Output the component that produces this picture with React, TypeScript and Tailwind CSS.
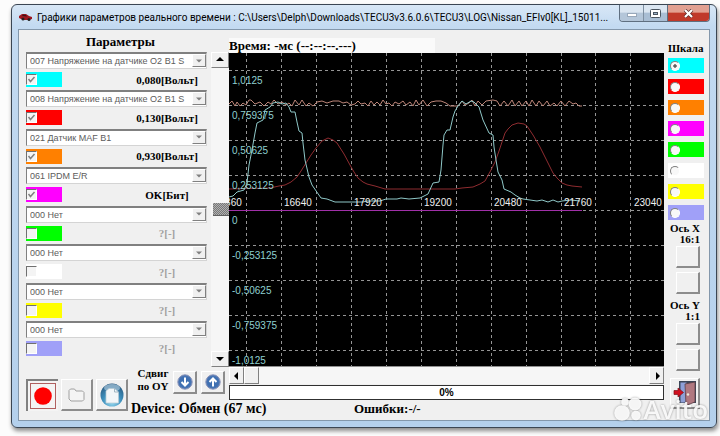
import { useState } from 'react';
import type { ReactNode } from 'react';
import clsx from 'clsx';

interface Channel {
  id: string;
  name: string;
  value: string;
  swatch: string;
  enabled: boolean;
}

const CHANNELS: Channel[] = [
  { id: 'ch0', name: '007 Напряжение на датчике О2 B1 S', value: '0,080[Вольт]', swatch: 'bg-[#00ffff]', enabled: true },
  { id: 'ch1', name: '008 Напряжение на датчике О2 B1 S', value: '0,130[Вольт]', swatch: 'bg-[#ff0000]', enabled: true },
  { id: 'ch2', name: '021 Датчик MAF B1', value: '0,930[Вольт]', swatch: 'bg-[#ff8000]', enabled: true },
  { id: 'ch3', name: '061 IPDM E/R', value: 'OK[Бит]', swatch: 'bg-[#ff00ff]', enabled: true },
  { id: 'ch4', name: '000 Нет', value: '?[-]', swatch: 'bg-[#00ff00]', enabled: false },
  { id: 'ch5', name: '000 Нет', value: '?[-]', swatch: 'bg-white', enabled: false },
  { id: 'ch6', name: '000 Нет', value: '?[-]', swatch: 'bg-[#ffff00]', enabled: false },
  { id: 'ch7', name: '000 Нет', value: '?[-]', swatch: 'bg-[#a0a0f8]', enabled: false },
];

const GRID_X = [17, 52, 87, 122, 157, 192, 227, 262, 297, 332, 366, 401];
const GRID_Y = [17, 52, 87, 122, 157, 192, 227, 262, 297];
const Y_LABELS = ['1,0125', '0,759375', '0,50625', '0,253125', '0', '-0,253125', '-0,50625', '-0,759375', '-1,0125'];
const X_LABELS = ['15360', '16640', '17920', '19200', '20480', '21760', '23040'];

const O2_TRACE =
  '0,144 4,143 8,139 15,137 18,130 20,112 23,97 26,80 28,70 34,67 36,57 41,54 44,50 49,49 53,51 57,50 60,54 62,59 66,59 68,69 70,78 73,80 74,90 76,107 80,124 83,132 92,145 98,146 106,149 134,149 138,148 151,148 157,146 168,146 172,145 180,146 191,145 199,141 204,130 210,129 212,117 214,92 215,82 218,77 221,77 224,64 226,58 229,53 233,48 237,51 242,48 245,49 250,54 254,67 260,80 264,82 265,94 267,107 269,119 273,127 275,136 282,139 286,142 291,145 294,146 301,147 308,148 313,147 319,149 324,147 329,149 333,148 342,147 351,148';

const MAF_TRACE =
  '0,136 41,135 50,133 56,132 62,129 68,124 72,118 77,110 82,102 87,95 93,88 99,85 104,87 108,90 115,101 121,112 125,119 129,125 134,129 138,131 146,133 156,136 226,136 233,135 244,134 251,131 256,128 262,117 266,109 270,98 276,80 279,76 283,72 289,70 295,71 298,73 304,82 311,94 319,110 324,120 328,125 333,130 338,132 343,133 353,134';

const NOISE_TRACE =
  '0,51 3,48 6,53 8,49 11,53 14,50 17,52 20,47 22,47 26,51 31,49 35,53 39,49 42,51 45,47 49,51 53,49 57,52 60,50 63,53 66,47 70,52 73,47 77,53 80,50 84,53 88,49 93,48 98,50 104,48 110,48 114,50 118,49 122,52 126,51 129,48 132,51 136,50 139,53 142,48 145,52 148,49 151,52 154,47 157,51 160,50 163,53 166,49 170,51 174,48 177,52 181,49 184,53 187,47 190,52 194,47 198,53 202,49 207,48 212,48 217,50 221,53 229,53 233,48 236,52 240,50 243,47 246,53 249,48 253,52 257,48 264,47 268,48 271,53 275,48 279,53 283,47 286,53 290,48 293,53 297,48 300,53 303,47 307,53 310,48 314,53 318,48 321,53 325,50 328,53 332,48 336,53 340,48 344,51 347,50 350,53 353,53';

const raised = 'border border-t-white border-l-white border-r-[#808080] border-b-[#808080] bg-[#f0f0f0]';

function Triangle({ dir, muted = false }: { dir: 'up' | 'down' | 'left' | 'right'; muted?: boolean }) {
  const shapes = {
    up: '0,5 4,1 8,5',
    down: '0,2 8,2 4,6',
    left: '5,0 5,8 1,4',
    right: '3,0 3,8 7,4',
  };
  return (
    <svg className={clsx('shrink-0', muted ? 'size-1.5' : 'size-2')} viewBox="0 0 8 8" aria-hidden="true">
      <polygon points={shapes[dir]} fill={muted ? '#808080' : '#000'} />
    </svg>
  );
}

function TitleBar() {
  return (
    <header className="flex h-6 shrink-0 items-center gap-1">
      <svg className="h-3 w-[15px] shrink-0" viewBox="0 0 15 12" aria-hidden="true">
        <path d="M1 5 4 3 8 3 11 5 14 6 14 8 11 9 5 9 1 7Z" fill="#a01820" />
        <path d="M4 5 5 3.500 8 4 9 5.500Z" fill="#3c1418" />
        <circle cx="5" cy="8" r="1.500" fill="#222" />
        <circle cx="11" cy="8.500" r="1.500" fill="#222" />
      </svg>
      <h1 className="min-w-0 flex-1 overflow-hidden font-['Roboto','Noto_Sans',sans-serif] text-[10px] whitespace-nowrap text-black">
        Графики параметров реального времени : C:\Users\Delph\Downloads\TECU3v3.6.0.6\TECU3\LOG\Nissan_EFIv0[KL]_15011...
      </h1>
      <div className="flex h-[17px] shrink-0 self-start overflow-hidden rounded-b border border-t-0 border-[#5f6f80]">
        <button type="button" aria-label="Свернуть" className="flex w-6 items-center justify-center border-r border-[#7f90a2] bg-linear-to-b from-[#dbe6f1] from-45% to-[#b4c6d9] to-50%">
          <span className="mt-1 h-1 w-2.5 border border-[#98a8ba] bg-white" />
        </button>
        <button type="button" aria-label="Развернуть" className="flex w-6 items-center justify-center border-r border-[#5f6f80] bg-linear-to-b from-[#dbe6f1] from-45% to-[#a9bed4] to-50%">
          <svg className="h-[9px] w-[11px]" viewBox="0 0 11 9" aria-hidden="true">
            <rect x="0.500" y="0.500" width="10" height="8" rx="1" fill="#fff" stroke="#4b5560" />
            <rect x="3.500" y="3.500" width="4" height="2" fill="#9db3c9" stroke="#4b5560" />
          </svg>
        </button>
        <button type="button" aria-label="Закрыть" className="flex w-[41px] items-center justify-center bg-linear-to-b from-[#e2a091] from-45% to-[#c0392a] to-50%">
          <svg className="h-[9px] w-[11px]" viewBox="0 0 11 9" aria-hidden="true">
            <path d="M2 1 9 8M9 1 2 8" stroke="#5a2a2a" strokeWidth="3.500" />
            <path d="M2 1 9 8M9 1 2 8" stroke="#fff" strokeWidth="2.200" />
          </svg>
        </button>
      </div>
    </header>
  );
}

function ChannelRow({ channel }: { channel: Channel }) {
  return (
    <li className="flex flex-col gap-[3px]">
      <div className="relative h-[17px]">
        <select
          aria-label="Параметр"
          disabled
          className="block size-full appearance-none overflow-hidden border border-t-2 border-[#808080] border-r-[#d4d4d4] border-b-[#d4d4d4] bg-white pr-3 pl-[3px] font-['Liberation_Sans',Arial,sans-serif] text-[9px] leading-3 text-[#5c5c5c] opacity-100"
        >
          <option>{channel.name}</option>
        </select>
        <span className={clsx('pointer-events-none absolute inset-y-0.5 right-px flex w-[14px] items-center justify-center', raised)}>
          <Triangle dir="down" muted />
        </span>
      </div>
      <div className="flex h-[15px] items-center justify-between">
        <label className={clsx('flex h-full w-9 items-center', channel.swatch)}>
          <span className="relative size-[11px]">
            <input
              type="checkbox"
              aria-label={channel.name}
              defaultChecked={channel.enabled}
              disabled
              className="block size-full appearance-none border border-t-[#707070] border-r-white border-b-white border-l-[#707070] bg-[#f4f4f4]"
            />
            {channel.enabled && (
              <svg className="absolute inset-0 size-full" viewBox="0 0 11 11" aria-hidden="true">
                <path d="M2.500 5 4.500 7.500 8.500 3" fill="none" stroke="#808080" strokeWidth="1.500" />
              </svg>
            )}
          </span>
        </label>
        <span
          className={clsx(
            'w-20 text-center text-[11px] leading-3 font-bold',
            channel.enabled ? 'text-black' : 'text-[#a0a0a0]',
          )}
        >
          {channel.value}
        </span>
      </div>
    </li>
  );
}

function VerticalScroll() {
  return (
    <div className="flex w-[18px] flex-col bg-[#f6f6f6]">
      <button type="button" aria-label="Вверх" className={clsx('flex h-4 items-center justify-center', raised)}>
        <Triangle dir="up" />
      </button>
      <div className="flex flex-1 items-center justify-end">
        <span className="h-[13px] w-4 border-b border-[#606060] bg-[repeating-conic-gradient(#777_0_25%,#b0b0b0_0_50%)] bg-size-[2px_2px]" />
      </div>
      <button type="button" aria-label="Вниз" className={clsx('flex h-4 items-center justify-center', raised)}>
        <Triangle dir="down" />
      </button>
    </div>
  );
}

function ToolButton({ label, className, children }: { label: string; className?: string; children?: ReactNode }) {
  return (
    <button
      type="button"
      aria-label={label}
      className={clsx('flex items-center justify-center border-t border-l border-r-2 border-b-2 border-t-white border-l-white border-r-[#8c8c8c] border-b-[#8c8c8c] bg-[#f0f0f0]', className)}
    >
      {children}
    </button>
  );
}

function ShiftIcon({ up = false }: { up?: boolean }) {
  return (
    <svg className="size-4" viewBox="0 0 16 16" aria-hidden="true">
      <circle cx="8" cy="8" r="7.200" fill="#4a76b4" stroke="#8a93b8" />
      <circle cx="8" cy="8" r="5.600" fill="#3f70b2" />
      <path
        d={up ? 'M8 12.500V4.500M4.500 8 8 4.500 11.500 8' : 'M8 3.500V11.500M4.500 8 8 11.500 11.500 8'}
        fill="none"
        stroke="#fff"
        strokeWidth="2"
      />
    </svg>
  );
}

function ParameterPanel() {
  return (
    <section className="flex w-[210px] shrink-0 flex-col">
      <h2 className="h-[22px] pt-1 pl-[67px] text-[13px] leading-4 font-bold">Параметры</h2>
      <div className="flex flex-1 justify-between pl-[7px]">
        <ul className="mb-[11px] flex w-[181px] flex-col justify-between">
          {CHANNELS.map((channel) => (
            <ChannelRow key={channel.id} channel={channel} />
          ))}
        </ul>
        <VerticalScroll />
      </div>
      <footer className="flex h-[53px] gap-[3px] pl-[7px]">
        <button
          type="button"
          aria-label="Запись"
          className="mt-3 flex size-8 shrink-0 items-center justify-center border-t-2 border-l-2 border-[#808080] bg-[#f4f4f4]"
        >
          <svg className="size-[26px]" viewBox="0 0 26 26" aria-hidden="true">
            <rect x="0.500" y="0.500" width="25" height="25" fill="none" stroke="#b06060" />
            <circle cx="13" cy="13" r="8.800" fill="#ff0000" />
          </svg>
        </button>
        <ToolButton label="Открыть" className="mt-3 size-8 shrink-0">
          <svg className="h-[14px] w-[18px]" viewBox="0 0 18 14" aria-hidden="true">
            <path d="M1 11V2.500L2.500 1H6.500L8 3H14.500L16 4.500V11.500L14.500 13H3Z" fill="#f4f4f4" stroke="#a0a0a0" />
          </svg>
        </ToolButton>
        <ToolButton label="Отчёт" className="mt-3 size-8 shrink-0">
          <svg className="size-6" viewBox="0 0 24 24" aria-hidden="true">
            <defs>
              <radialGradient id="globe" cx="0.5" cy="0.8" r="0.8">
                <stop offset="0" stopColor="#9fe0f4" />
                <stop offset="0.5" stopColor="#3d8fbc" />
                <stop offset="1" stopColor="#2a587e" />
              </radialGradient>
            </defs>
            <circle cx="12" cy="12" r="11.500" fill="url(#globe)" />
            <ellipse cx="12" cy="5" rx="8" ry="4" fill="#a9c8dc" opacity="0.700" />
            <path d="M6 8 9 5.500H14.500L18.500 9V20H6Z" fill="#f2f6f8" stroke="#b5c8d2" strokeWidth="0.700" />
            <path d="M14.500 5.500V9H18.500" fill="none" stroke="#8fa8b5" strokeWidth="0.800" />
          </svg>
        </ToolButton>
        <div className="flex min-w-0 flex-1 flex-col">
          <div className="flex h-[34px] gap-1 pl-1.5">
            <p className="w-8 shrink-0 text-center text-[11px] leading-[13px] font-bold whitespace-nowrap">
              Сдвиг
              <br />
              по OY
            </p>
            <ToolButton label="Сдвиг вниз" className="mt-1 h-[23px] w-6 shrink-0">
              <ShiftIcon />
            </ToolButton>
            <ToolButton label="Сдвиг вверх" className="mt-1 h-[23px] w-6 shrink-0">
              <ShiftIcon up />
            </ToolButton>
          </div>
          <p className="text-[14px] leading-4 font-bold whitespace-nowrap">Device: Обмен (67 мс)</p>
        </div>
      </footer>
    </section>
  );
}

function Chart() {
  return (
    <div className="min-h-0 flex-1 bg-black">
      <svg
        className="size-full font-['Liberation_Sans',Arial,sans-serif] text-[10px]"
        viewBox="0 0 436 313"
        preserveAspectRatio="xMinYMin slice"
        role="img"
        aria-label="Графики параметров"
      >
        <g stroke="#959595" strokeDasharray="3 3" shapeRendering="crispEdges">
          {GRID_X.map((x) => (
            <line key={x} x1={x + 0.5} x2={x + 0.5} y1="0" y2="313" />
          ))}
          {GRID_Y.map((y) => (
            <line key={y} x1="0" x2="436" y1={y + 0.5} y2={y + 0.5} />
          ))}
        </g>
        <g fill="none">
          <polyline points={MAF_TRACE} stroke="#8f2c30" />
          <polyline points={NOISE_TRACE} stroke="#bd8578" />
          <polyline points={O2_TRACE} stroke="#8fc8c8" />
          <line x1="0" x2="353" y1="157.500" y2="157.500" stroke="#a030a8" shapeRendering="crispEdges" />
        </g>
        <g fill="#8fd0d0">
          {Y_LABELS.map((label, i) => (
            <text key={label} x="3" y={GRID_Y[i] + 14}>
              {label}
            </text>
          ))}
        </g>
        <g fill="#f0f0f0">
          {X_LABELS.map((label, i) => (
            <text key={label} x={i * 70 - 15} y="153">
              {label}
            </text>
          ))}
        </g>
      </svg>
    </div>
  );
}

function ChartPanel() {
  return (
    <section className="flex min-w-0 flex-1 flex-col">
      <div className="flex h-[23px] items-end">
        <p className="h-[15px] w-[206px] bg-[#fafafa] text-[13px] leading-4 font-bold whitespace-nowrap">
          Время: -мс (--:--:--.---)
        </p>
      </div>
      <Chart />
      <div className="flex h-[18px] border-t border-[#909090] bg-[#f6f6f6]">
        <button type="button" aria-label="Влево" className={clsx('flex w-[15px] items-center justify-center', raised)}>
          <Triangle dir="left" />
        </button>
        <span className={clsx('w-[15px]', raised)} />
        <span className="flex-1" />
        <button type="button" aria-label="Вправо" className={clsx('flex w-[15px] items-center justify-center', raised)}>
          <Triangle dir="right" />
        </button>
      </div>
      <div
        role="progressbar"
        aria-label="Выполнение"
        aria-valuenow={0}
        className="mt-px flex h-[15px] items-center justify-center border border-[#303030] bg-white font-['Liberation_Sans',Arial,sans-serif] text-[10px] font-bold"
      >
        0%
      </div>
      <p className="h-5 pt-px pl-[125px] text-[13px] leading-4 font-bold">Ошибки:-/-</p>
    </section>
  );
}

function AxisControls({ axis, scale }: { axis: string; scale: string }) {
  return (
    <div className="flex w-8 flex-col items-end">
      <p className="mb-px text-right text-[11px] leading-[11px] font-bold whitespace-nowrap">
        Ось {axis}
        <br />
        {scale}
      </p>
      <div className="flex flex-col gap-1">
        <ToolButton label={`Увеличить ${axis}`} className="h-[22px] w-6" />
        <ToolButton label={`Уменьшить ${axis}`} className="h-[22px] w-6" />
      </div>
    </div>
  );
}

function ScalePanel() {
  const [active, setActive] = useState('ch0');

  return (
    <aside className="flex w-[45px] shrink-0 flex-col pt-[10px] pl-1">
      <h2 className="h-[18px] text-[11px] leading-4 font-bold">Шкала</h2>
      <div className="flex flex-col gap-1.5">
        {CHANNELS.map((channel) => (
          <label key={channel.id} className={clsx('flex h-[15px] w-9 items-center pl-0.5', channel.swatch)}>
            <input
              type="radio"
              name="scale"
              aria-label={channel.name}
              checked={active === channel.id}
              onChange={() => setActive(channel.id)}
              className="size-[10px] appearance-none rounded-full border border-t-[#808080] border-r-white border-b-white border-l-[#808080] bg-[#f8f8f8] checked:bg-radial checked:from-[#606060] checked:from-25% checked:to-[#f8f8f8] checked:to-35%"
            />
          </label>
        ))}
      </div>
      <div className="mt-[3px] flex flex-col gap-1.5">
        <AxisControls axis="X" scale="16:1" />
        <AxisControls axis="Y" scale="1:1" />
      </div>
      <ToolButton label="Выход" className="mt-[7px] ml-0.5 h-[31px] w-[30px]">
        <svg className="h-[26px] w-6" viewBox="0 0 24 26" aria-hidden="true">
          <rect x="6" y="1" width="17" height="22" fill="#3c4658" />
          <rect x="7.500" y="2.500" width="6" height="20" fill="#8ea0d8" />
          <path d="M12 4 22 2V22L13 25.500Z" fill="#b07880" stroke="#5a4048" strokeWidth="0.800" />
          <circle cx="15" cy="14.500" r="1.200" fill="#f0e8d8" />
          <path d="M1 10.500H5V8L10.500 12.500 5 17V14.500H1Z" fill="#d01020" stroke="#801018" strokeWidth="0.700" />
        </svg>
      </ToolButton>
    </aside>
  );
}

function Watermark() {
  return (
    <div className="pointer-events-none absolute right-2 bottom-1 flex items-center gap-0.5 text-white/90 drop-shadow-[0_0_1px_rgba(0,0,0,0.4)]">
      <svg className="h-6 w-[28px]" viewBox="0 0 28 24" fill="currentColor" aria-hidden="true">
        <circle cx="11" cy="5" r="3.800" />
        <circle cx="21" cy="7" r="6.500" />
        <circle cx="8" cy="16" r="7.800" />
        <circle cx="22" cy="18.500" r="4.800" />
      </svg>
      <span className="font-['Open_Sans','Noto_Sans',sans-serif] text-[26px] leading-7 font-semibold">Avito</span>
    </div>
  );
}

export default function App() {
  return (
    <div className="flex min-h-screen bg-[#fcfcfc] pt-1 pr-[3px] pb-2 pl-[11px] font-['Liberation_Serif','Times_New_Roman',serif] text-black">
      <main className="relative flex min-w-0 flex-1 flex-col rounded-md border border-[#3b4653] bg-linear-to-b from-[#d8e7f6] via-[#c3daf1] via-5% to-[#b4d0ec] px-1.5 pb-1.5 shadow-[1px_3px_4px_rgba(0,0,0,0.45)]">
        <TitleBar />
        <div className="flex flex-1 border border-[#8397ab] bg-[#f0f0f0]">
          <ParameterPanel />
          <ChartPanel />
          <ScalePanel />
        </div>
        <Watermark />
      </main>
    </div>
  );
}
